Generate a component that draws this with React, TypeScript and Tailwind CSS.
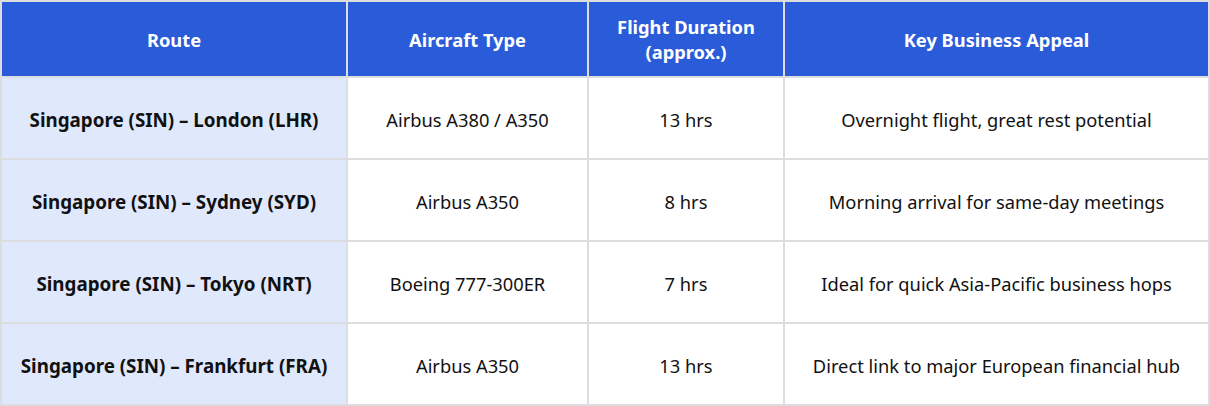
import React from 'react'

interface RouteRow {
    route: string;
    aircraft: string;
    duration: string;
    appeal: string;
}

const rows: RouteRow[] = [
    { route: "Singapore (SIN) – London (LHR)", aircraft: "Airbus A380 / A350", duration: "13 hrs", appeal: "Overnight flight, great rest potential" },
    { route: "Singapore (SIN) – Sydney (SYD)", aircraft: "Airbus A350", duration: "8 hrs", appeal: "Morning arrival for same-day meetings" },
    { route: "Singapore (SIN) – Tokyo (NRT)", aircraft: "Boeing 777-300ER", duration: "7 hrs", appeal: "Ideal for quick Asia-Pacific business hops" },
    { route: "Singapore (SIN) – Frankfurt (FRA)", aircraft: "Airbus A350", duration: "13 hrs", appeal: "Direct link to major European financial hub" },
];

const App = () => {
    return (
        <div className="w-[1210px] h-[406px] bg-white font-['Noto_Sans',sans-serif] text-[#111]">
            <table className="w-full border-collapse table-fixed">
                <colgroup>
                    <col className="w-[346px]" />
                    <col className="w-[241px]" />
                    <col className="w-[196px]" />
                    <col />
                </colgroup>
                <thead>
                    <tr className="h-[76px] bg-[#2a5bd8] text-white text-[18.3px] font-bold leading-[25px]">
                        <th className="border-2 border-[#dcdde0] font-bold">Route</th>
                        <th className="border-2 border-[#dcdde0] font-bold">Aircraft Type</th>
                        <th className="border-2 border-[#dcdde0] font-bold">Flight Duration<br />(approx.)</th>
                        <th className="border-2 border-[#dcdde0] font-bold">Key Business Appeal</th>
                    </tr>
                </thead>
                <tbody>
                    {rows.map((row) => (
                        <tr key={row.route} className="h-[82px] text-[18.3px] text-center">
                            <td className="border-2 border-[#dcdde0] bg-[#e0e8fc] font-bold text-[18.8px] pt-1">{row.route}</td>
                            <td className="border-2 border-[#dcdde0] pt-1">{row.aircraft}</td>
                            <td className="border-2 border-[#dcdde0] pt-1">{row.duration}</td>
                            <td className="border-2 border-[#dcdde0] pt-1">{row.appeal}</td>
                        </tr>
                    ))}
                </tbody>
            </table>
        </div>
    )
}

export default App
